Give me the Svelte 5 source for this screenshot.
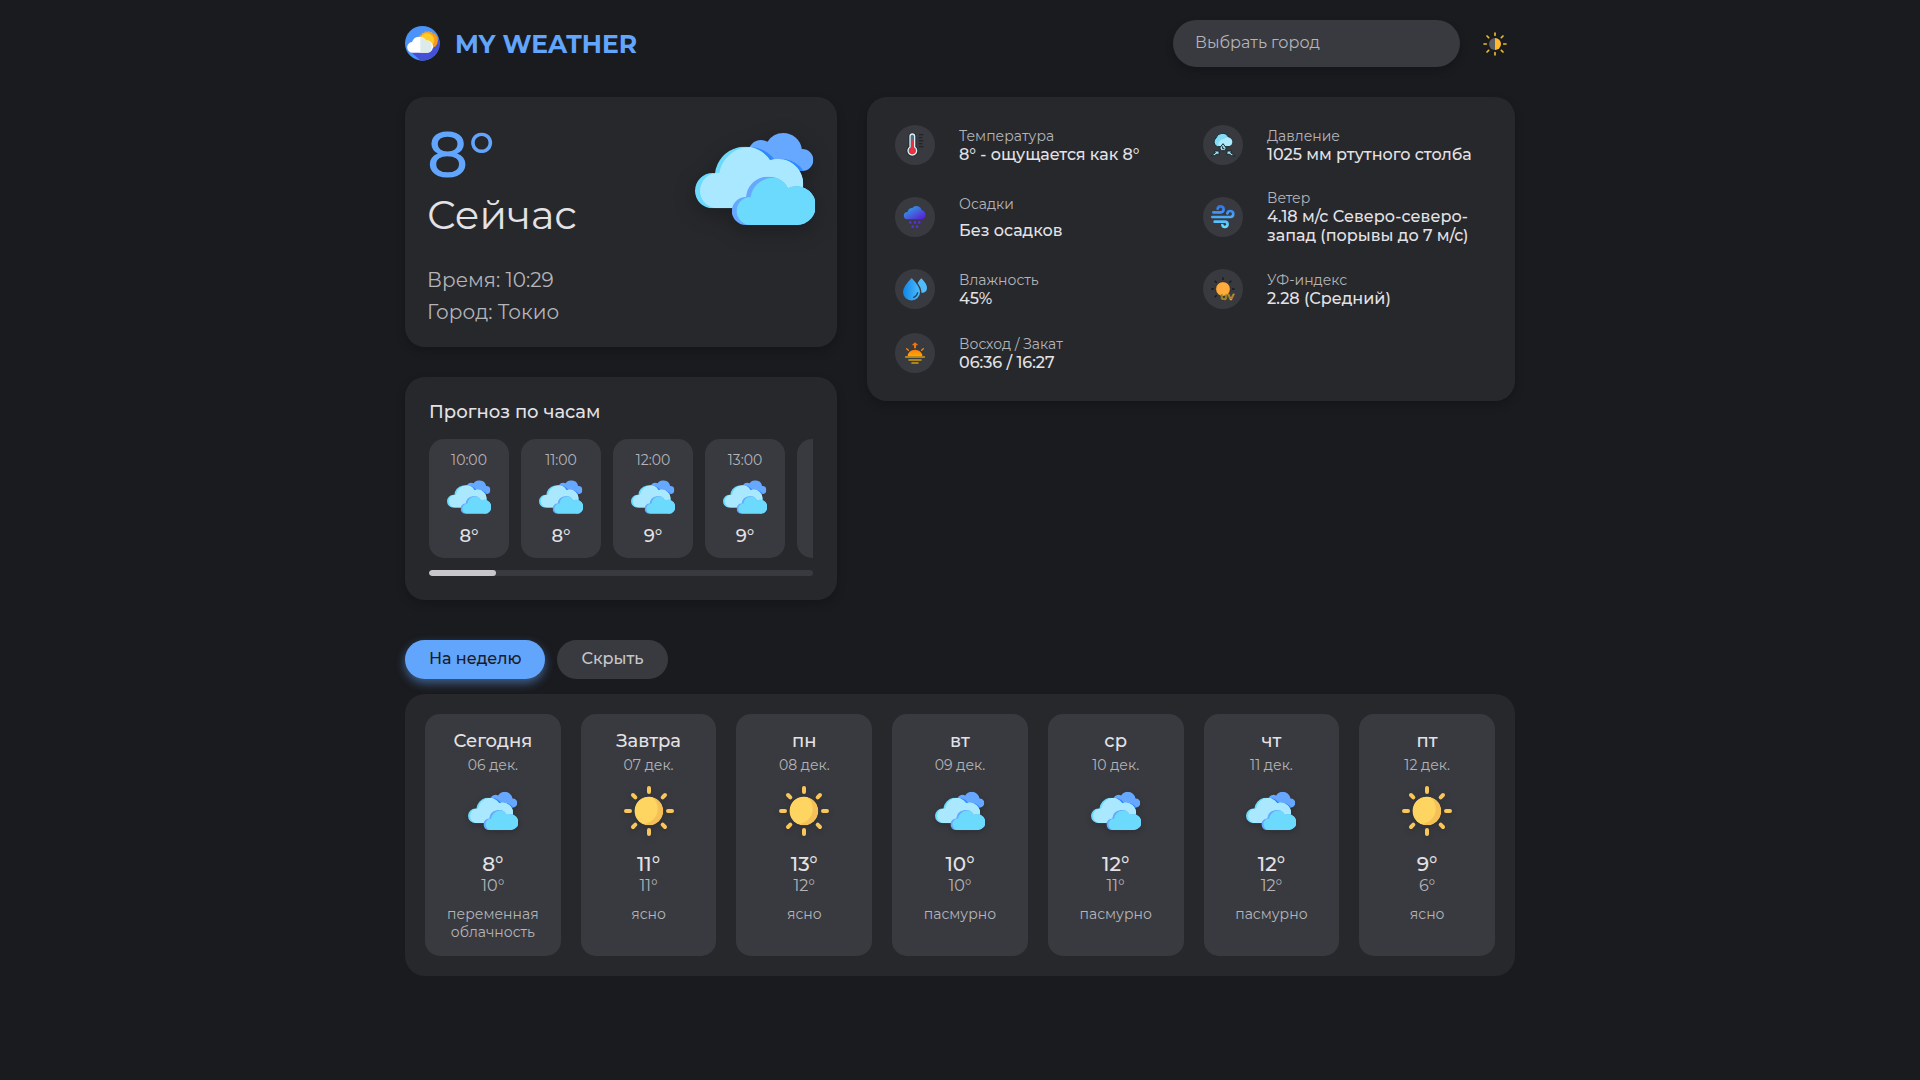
<script>
  let city = $state("");
  let dark = $state(true);
  let activeTab = $state("week");
  let scrolled = $state(0);
  let viewWidth = $state(384);

  const HOUR_WIDTH = 80;
  const HOUR_GAP = 12;

  const today = { temp: 8, time: "10:29", city: "Токио" };

  const details = [
    { icon: "thermometer", label: "Температура", value: "8° - ощущается как 8°" },
    { icon: "pressure", label: "Давление", value: "1025 мм ртутного столба" },
    { icon: "rain", label: "Осадки", value: "Без осадков", spaced: true },
    { icon: "wind", label: "Ветер", value: "4.18 м/с Северо-северо-запад (порывы до 7 м/с)" },
    { icon: "humidity", label: "Влажность", value: "45%" },
    { icon: "uv", label: "УФ-индекс", value: "2.28 (Средний)" },
    { icon: "sunrise", label: "Восход / Закат", value: "06:36 / 16:27" },
  ];

  const hourTemps = [8, 8, 9, 9, 10, 10, 9, 9, 8, 8, 7, 7, 7, 6, 6, 6, 6, 6, 7, 7, 8, 9, 10, 11];
  const hours = hourTemps.map((temp, i) => ({
    time: String((10 + i) % 24).padStart(2, "0") + ":00",
    temp,
  }));

  const days = [
    { name: "Сегодня", date: "06 дек.", icon: "cloud", max: 8, min: 10, info: "переменная облачность" },
    { name: "Завтра", date: "07 дек.", icon: "sun", max: 11, min: 11, info: "ясно" },
    { name: "пн", date: "08 дек.", icon: "sun", max: 13, min: 12, info: "ясно" },
    { name: "вт", date: "09 дек.", icon: "cloud", max: 10, min: 10, info: "пасмурно" },
    { name: "ср", date: "10 дек.", icon: "cloud", max: 12, min: 11, info: "пасмурно" },
    { name: "чт", date: "11 дек.", icon: "cloud", max: 12, min: 12, info: "пасмурно" },
    { name: "пт", date: "12 дек.", icon: "sun", max: 9, min: 6, info: "ясно" },
  ];

  const listWidth = hours.length * (HOUR_WIDTH + HOUR_GAP) - HOUR_GAP;
  let thumbWidth = $derived((viewWidth / listWidth) * 100);
  let thumbLeft = $derived((scrolled / listWidth) * 100);
</script>

<svg class="sprite" aria-hidden="true">
  <defs>
    <linearGradient id="g-rain" x1="0" y1="0" x2="1" y2="1">
      <stop offset="0.1" stop-color="#2fa4e4" />
      <stop offset="1" stop-color="#5b12d2" />
    </linearGradient>
    <linearGradient id="g-drop" x1="0" y1="0" x2="1" y2="0">
      <stop offset="0" stop-color="#0f85e6" />
      <stop offset="1" stop-color="#4dbcff" />
    </linearGradient>
    <linearGradient id="g-wind" gradientUnits="userSpaceOnUse" x1="0" y1="0" x2="0" y2="72">
      <stop offset="0" stop-color="#2a70ee" />
      <stop offset="1" stop-color="#6ce4ff" />
    </linearGradient>
    <linearGradient id="g-rise" x1="0" y1="0" x2="0" y2="1">
      <stop offset="0" stop-color="#ff7c05" />
      <stop offset="1" stop-color="#ffa90a" />
    </linearGradient>
    <clipPath id="c-back">
      <circle cx="228" cy="98" r="38" />
      <circle cx="295" cy="95" r="56" />
      <circle cx="352" cy="120" r="33" />
    </clipPath>
    <clipPath id="c-main">
      <path d="M83 265a53 53 0 0 1 0-106q4 0 7 1a90 90 0 0 1 165-39 75 75 0 0 1 98 86v58Z" />
    </clipPath>
    <clipPath id="c-front">
      <path d="M182 315a42 42 0 1 1 1-84a67 67 0 0 1 126-26a58 58 0 1 1 23 110Z" />
    </clipPath>
    <clipPath id="c-disc"><circle cx="75" cy="75" r="43" /></clipPath>
    <clipPath id="c-logo"><circle cx="52" cy="52" r="52" /></clipPath>
  </defs>

  <symbol id="cloud" viewBox="30 -3 360 360">
    <g clip-path="url(#c-back)">
      <rect x="180" y="30" width="210" height="130" fill="#66a7ff" />
      <circle cx="196" cy="172" r="90" fill="#2e88ff" />
      <circle cx="291" cy="192" r="75" fill="#2e88ff" />
    </g>
    <g clip-path="url(#c-main)">
      <rect x="30" y="80" width="330" height="190" fill="#6cdafd" />
      <path fill="#aae8ff" d="M98 265a53 53 0 0 1 0-106h5a92 92 0 0 1 85-77h200v183Z" />
    </g>
    <g clip-path="url(#c-front)">
      <rect x="140" y="170" width="250" height="145" fill="#66a7ff" />
      <path fill="#6cdafd" d="M197 315a42 42 0 0 1 0-84a68 68 0 0 1 61-58h140v142Z" />
    </g>
  </symbol>

  <symbol id="sun" viewBox="0 0 150 150">
    <g clip-path="url(#c-disc)">
      <circle cx="75" cy="75" r="43" fill="#f6c058" />
      <circle cx="55" cy="68" r="46" fill="#ffd561" />
    </g>
    <g stroke="#f9c65a" stroke-width="12" stroke-linecap="round">
      <path d="M75 6v12M75 132v12M6 75h12M132 75h12" />
      <path d="M27 27l7 7M123 27l-7 7M27 123l7-7M123 123l-7-7" />
    </g>
  </symbol>

  <symbol id="logo" viewBox="0 0 105 105">
    <g clip-path="url(#c-logo)">
      <rect width="105" height="105" fill="#4a93fa" />
      <path fill="#4450d6" d="M18 78 48 105h57V45L90 30 60 78Z" />
    </g>
    <circle cx="68" cy="43" r="25" fill="#ffa51f" stroke="#ffa51f" stroke-width="5" stroke-dasharray="5 4" />
    <path fill="#f39a20" d="M68 22a21 21 0 0 1 14 37l8 4a27 27 0 0 0 0-40Z" />
    <circle cx="66" cy="43" r="21" fill="#ffcb25" />
    <path fill="#fff" d="M24 80a16 16 0 0 1-3-32 23 23 0 0 1 42-4 18 18 0 0 1 6 36Z" />
    <path fill="#dcebea" d="M46 33q11 0 18 11a14 14 0 0 1 16 16q1 18-13 20H46Z" />
  </symbol>

  <symbol id="theme" viewBox="0 0 72 72">
    <path fill="#5c5d62" d="M36 18a18 18 0 0 0 0 36Z" />
    <path fill="#ffb92d" d="M36 18a18 18 0 0 1 0 36Z" />
    <path stroke="#ecbd2b" stroke-width="5" stroke-linecap="round" d="M36 3v7M36 62v7M3 36h7M62 36h7M12 12l5 5M60 12l-5 5M12 60l5-5M60 60l-5-5" />
  </symbol>

  <symbol id="thermometer" viewBox="0 0 72 72">
    <path fill="#4c7183" stroke="#16262d" stroke-width="9" d="M21 10a7 7 0 0 1 14 0v32a13 13 0 1 1-14 0Z" />
    <path fill="#4c7183" stroke="#dcf0f5" stroke-width="4" d="M21 10a7 7 0 0 1 14 0v32a13 13 0 1 1-14 0Z" />
    <path fill="#ee2f3d" d="M25 22h6v22a10 10 0 1 1-6 0Z" />
    <path fill="none" stroke="#222326" stroke-width="4" d="M48 5h13M48 14h10M48 23h13M48 32h10M48 41h13" />
  </symbol>

  <symbol id="pressure" viewBox="0 0 72 72">
    <path fill="#83dcf5" stroke="#18282e" stroke-width="3" d="M19 41A15 15 0 0 1 15 15a20 20 0 0 1 37-3 15 15 0 0 1 2 29Z" />
    <path fill="#aeeafb" d="M22 34q2-15 17-16 8-9 18-3a13 13 0 0 1-2 24H27q-5-1-5-5Z" />
    <path fill="#9fe5f8" stroke="#18282e" stroke-width="3" d="m36 32 10 13-5 8H31l-5-8Z" />
    <path fill="none" stroke="#18282e" stroke-width="3" d="M35 40v7h5" />
    <path fill="#9fe5f8" stroke="#18282e" stroke-width="3" d="m0 69 13-10-3-5h14v12l-6-3q-5 6-18 6ZM72 69 59 59l3-5H48v12l6-3q5 6 18 6Z" />
  </symbol>

  <symbol id="rain" viewBox="0 0 72 72">
    <path fill="url(#g-rain)" d="M13 43a11 11 0 0 1 1-22 13 13 0 0 1 14-12 16 16 0 0 1 28 7 14 14 0 0 1 2 27Z" />
    <g fill="#542fd5">
      <ellipse cx="22" cy="52" rx="4" ry="5" />
      <ellipse cx="36" cy="52" rx="4" ry="5" />
      <ellipse cx="49" cy="52" rx="4" ry="5" />
      <ellipse cx="29" cy="65" rx="4" ry="5" />
      <ellipse cx="42" cy="65" rx="4" ry="5" />
    </g>
  </symbol>

  <symbol id="wind" viewBox="0 0 72 72">
    <g fill="none" stroke="url(#g-wind)" stroke-width="8" stroke-linecap="round">
      <path d="M7 22h22a9 9 0 1 0-9-11" />
      <path d="M4 36h54a9 9 0 1 0-9-11" />
      <path d="M11 50h32a8 8 0 1 1-9 10" />
    </g>
  </symbol>

  <symbol id="humidity" viewBox="0 0 72 72">
    <path fill="#52bcfb" d="M55 4q17 17 17 29 0 13-16 15-1-16-12-30 5-9 11-14Z" />
    <path fill="url(#g-drop)" d="M26 3q25 26 25 42a25 25 0 0 1-51 0Q0 29 26 3Z" />
    <path fill="none" stroke="#24486b" stroke-width="4" stroke-linecap="round" d="M44 47q-2 11-12 14" />
  </symbol>

  <symbol id="uv" viewBox="0 0 72 72">
    <path stroke="#19191a" stroke-width="4" d="M36 1v8M36 63v8M1 36h8M63 36h8M11 11l6 6M61 11l-6 6M11 61l6-6" />
    <circle cx="36" cy="36" r="22" fill="#ffab3d" stroke="#241d15" stroke-width="2" />
    <text class="uv-text" x="28" y="68">UV</text>
  </symbol>

  <symbol id="sunrise" viewBox="0 0 72 72">
    <path fill="#f7740a" d="M36 4l10 9h-7v9h-6v-9h-7Z" />
    <path stroke="#ef870c" stroke-width="4" stroke-linecap="round" d="m11 23 5 5M61 23l-5 5" />
    <path fill="url(#g-rise)" d="M14 46a22 20 0 0 1 44 0Z" />
    <path stroke="#cf9f12" stroke-width="5" stroke-linecap="round" d="M8 48h56M18 57h36M27 66h18" />
  </symbol>
</svg>

<div class="container">
  <header class="header">
    <a class="header__brand" href="/">
      <svg class="header__logo" aria-hidden="true"><use href="#logo" /></svg>
      <span class="header__title">MY WEATHER</span>
    </a>
    <div class="header__tools">
      <input
        class="header__search"
        type="text"
        aria-label="Выбрать город"
        placeholder="Выбрать город"
        autocomplete="off"
        bind:value={city} />
      <button class="header__theme" aria-label="Сменить тему" onclick={() => (dark = !dark)}>
        <svg aria-hidden="true"><use href="#theme" /></svg>
      </button>
    </div>
  </header>

  <main>
    <div class="overview">
      <div class="overview__side">
        <section class="card today">
          <div class="today__top">
            <div>
              <div class="today__temp">{today.temp}°</div>
              <div class="today__now">Сейчас</div>
            </div>
            <svg class="today__icon" aria-hidden="true"><use href="#cloud" /></svg>
          </div>
          <div class="today__info">Время: {today.time}</div>
          <div class="today__info">Город: {today.city}</div>
        </section>

        <section class="card hourly">
          <h2 class="hourly__title">Прогноз по часам</h2>
          <div
            class="hourly__list"
            bind:clientWidth={viewWidth}
            onscroll={(e) => (scrolled = e.currentTarget.scrollLeft)}>
            {#each hours as hour}
              <div class="hour">
                <div class="hour__time">{hour.time}</div>
                <svg class="hour__icon" aria-hidden="true"><use href="#cloud" /></svg>
                <div class="hour__temp">{hour.temp}°</div>
              </div>
            {/each}
          </div>
          <div class="hourly__track">
            <div class="hourly__thumb" style="width: {thumbWidth}%; margin-left: {thumbLeft}%"></div>
          </div>
        </section>
      </div>

      <section class="card details">
        {#each details as item}
          <div class="detail">
            <div class="detail__icon">
              <svg aria-hidden="true"><use href="#{item.icon}" /></svg>
            </div>
            <div class="detail__text" class:detail__text--spaced={item.spaced}>
              <div class="detail__label">{item.label}</div>
              <div class="detail__value">{item.value}</div>
            </div>
          </div>
        {/each}
      </section>
    </div>

    <div class="tabs">
      <button class="tab" class:tab--active={activeTab === "week"} onclick={() => (activeTab = "week")}>
        На неделю
      </button>
      <button class="tab" class:tab--active={activeTab === "hidden"} onclick={() => (activeTab = "hidden")}>
        Скрыть
      </button>
    </div>

    {#if activeTab === "week"}
      <section class="week">
        {#each days as day}
          <div class="day">
            <div class="day__name">{day.name}</div>
            <div class="day__date">{day.date}</div>
            <svg class="day__icon" aria-hidden="true"><use href="#{day.icon}" /></svg>
            <div class="day__max">{day.max}°</div>
            <div class="day__min">{day.min}°</div>
            <div class="day__info">{day.info}</div>
          </div>
        {/each}
      </section>
    {/if}
  </main>
</div>

<style>
  :global(body) {
    --surface: #27282c;
    --surface-high: #393a3f;
    --text: #e3e2e6;
    --text-dim: #b4b4b9;
    --accent: #62a5fc;
    background: #1a1b1f;
    color: var(--text);
    font-family: Montserrat, Inter, sans-serif;
    font-size: 16px;
  }

  .sprite {
    position: absolute;
    width: 0;
    height: 0;
  }

  .uv-text {
    font-size: 27px;
    font-weight: 600;
    fill: #1c1a16;
    stroke: #d9a930;
    stroke-width: 2px;
  }

  .container {
    max-width: 1110px;
    margin: 0 auto;
    padding: 20px 15px;
  }

  .header {
    display: flex;
    align-items: center;
    justify-content: space-between;
    margin-bottom: 30px;
  }

  .header__brand {
    display: flex;
    align-items: center;
    gap: 15px;
    color: var(--accent);
    text-decoration: none;
  }

  .header__logo {
    width: 35px;
    height: 35px;
  }

  .header__title {
    font-size: 25px;
    font-weight: 700;
    line-height: 30px;
  }

  .header__tools {
    display: flex;
    align-items: center;
    gap: 15px;
  }

  .header__search {
    box-sizing: border-box;
    width: 287px;
    height: 47px;
    padding: 0 22px 2px;
    border: 0;
    border-radius: 24px;
    background: var(--surface-high);
    box-shadow: 0 4px 8px rgba(0, 0, 0, 0.2);
    color: var(--text);
    font: inherit;
  }

  .header__search::placeholder {
    color: var(--text-dim);
    opacity: 1;
  }

  .header__theme {
    padding: 8px;
    border: 0;
    background: none;
    cursor: pointer;
  }

  .header__theme svg {
    display: block;
    width: 24px;
    height: 24px;
  }

  .overview {
    display: grid;
    grid-template-columns: 2fr 3fr;
    gap: 30px;
    align-items: start;
  }

  .overview__side {
    display: grid;
    gap: 30px;
    min-width: 0;
  }

  .card {
    border-radius: 20px;
    background: var(--surface);
    box-shadow: 0 4px 10px rgba(0, 0, 0, 0.2);
    min-width: 0;
  }

  .today {
    padding: 22px 22px 19px;
  }

  .today__top {
    display: flex;
    justify-content: space-between;
    margin-bottom: 23px;
  }

  .today__temp {
    color: var(--accent);
    font-size: 64px;
    font-weight: 500;
    line-height: 70px;
  }

  .today__now {
    font-size: 40px;
    line-height: 52px;
  }

  .today__icon {
    width: 120px;
    height: 120px;
    filter: drop-shadow(0 6px 10px rgba(0, 0, 0, 0.25));
  }

  .today__info {
    color: var(--text-dim);
    font-size: 20px;
    line-height: 32px;
  }

  .hourly {
    padding: 24px;
  }

  .hourly__title {
    margin: 0 0 16px;
    font-size: 18px;
    font-weight: 500;
    line-height: 22px;
  }

  .hourly__list {
    display: flex;
    gap: 12px;
    margin-bottom: 12px;
    overflow-x: auto;
    scrollbar-width: none;
  }

  .hour {
    display: flex;
    flex-direction: column;
    align-items: center;
    flex: 0 0 80px;
    box-sizing: border-box;
    padding: 12px 0 11px;
    border-radius: 15px;
    background: var(--surface-high);
  }

  .hour__time {
    color: var(--text-dim);
    font-size: 14px;
    line-height: 18px;
  }

  .hour__icon {
    width: 44px;
    height: 44px;
    margin: 6px 0;
  }

  .hour__temp {
    font-size: 18px;
    font-weight: 500;
    line-height: 22px;
  }

  .hourly__track {
    border-radius: 3px;
    background: var(--surface-high);
    overflow: hidden;
  }

  .hourly__thumb {
    height: 6px;
    border-radius: 3px;
    background: #c7c6ca;
  }

  .details {
    display: grid;
    grid-template-columns: 1fr 1fr;
    gap: 24px;
    padding: 28px;
  }

  .detail {
    display: flex;
    align-items: center;
    gap: 24px;
  }

  .detail__icon {
    display: flex;
    align-items: center;
    justify-content: center;
    flex: 0 0 40px;
    height: 40px;
    border-radius: 50%;
    background: var(--surface-high);
  }

  .detail__icon svg {
    width: 24px;
    height: 24px;
  }

  .detail__text--spaced {
    display: grid;
    gap: 8px;
  }

  .detail__label {
    color: var(--text-dim);
    font-size: 14px;
    line-height: 18px;
  }

  .detail__value {
    font-size: 16px;
    font-weight: 500;
    line-height: 19px;
  }

  .tabs {
    display: flex;
    gap: 12px;
    margin: 40px 0 15px;
  }

  .tab {
    padding: 9px 24px 11px;
    border: 0;
    border-radius: 20px;
    background: var(--surface-high);
    color: #c7c6ca;
    font: inherit;
    font-weight: 500;
    line-height: 19px;
    cursor: pointer;
  }

  .tab--active {
    background: var(--accent);
    box-shadow: 0 4px 10px rgba(98, 165, 252, 0.5);
    color: #1a1b1f;
  }

  .week {
    display: grid;
    grid-template-columns: repeat(7, 1fr);
    gap: 20px;
    padding: 20px;
    border-radius: 20px;
    background: var(--surface);
  }

  .day {
    display: flex;
    flex-direction: column;
    align-items: center;
    padding: 16px 10px 15px;
    border-radius: 15px;
    background: var(--surface-high);
    text-align: center;
  }

  .day__name {
    font-size: 18px;
    font-weight: 500;
    line-height: 22px;
  }

  .day__date {
    margin-top: 4px;
    color: var(--text-dim);
    font-size: 14px;
    line-height: 18px;
  }

  .day__icon {
    width: 50px;
    height: 50px;
    margin: 12px 0 16px;
    filter: drop-shadow(0 2px 3px rgba(0, 0, 0, 0.2));
  }

  .day__max {
    font-size: 20px;
    font-weight: 500;
    line-height: 24px;
  }

  .day__min {
    color: var(--text-dim);
    font-size: 16px;
    line-height: 19px;
  }

  .day__info {
    margin-top: 10px;
    color: var(--text-dim);
    font-size: 14px;
    line-height: 18px;
  }
</style>
